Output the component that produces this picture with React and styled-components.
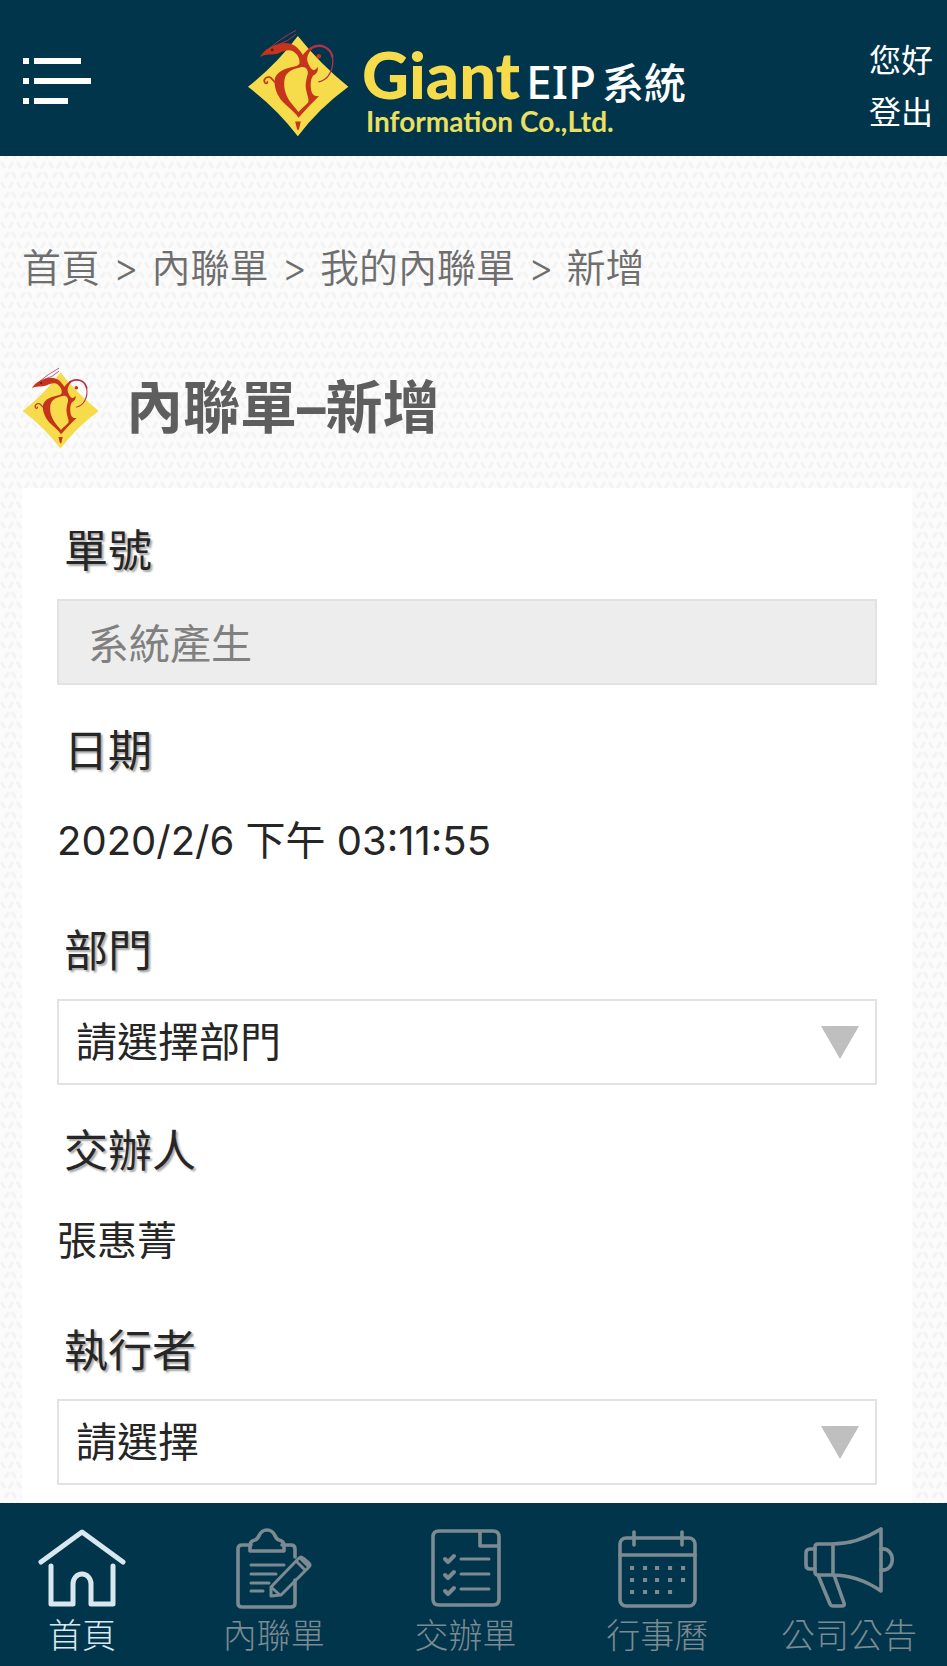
import React from "react"
import styled, { createGlobalStyle } from "styled-components"

const colors = {
  Navy: "#01354b",
  Yellow: "#f6dc4b",
  Red: "#c6341b",
  Gray: "#6e6e6e",
  TitleGray: "#5e5e5e",
  Border: "#e2e2e2",
  Text: "#262626",
}

const weave = `url("data:image/svg+xml,%3Csvg xmlns='http://www.w3.org/2000/svg' width='16' height='20'%3E%3Cg fill='none' stroke='%23f3f3f3' stroke-width='3'%3E%3Cpath d='M1 2l4 6M9 8l4-6M5 18l4-6M12 12l4 6'/%3E%3C/g%3E%3C/svg%3E")`

const GlobalStyle = createGlobalStyle`
  * {
    box-sizing: border-box;
  }
  body {
    margin: 0;
    background: #fbfbfb ${weave};
    color: ${colors.Text};
    font-family: Inter, "Noto Sans CJK TC", sans-serif;
  }
`

const Page = styled.div`
  display: flex;
  flex-direction: column;
  min-height: 100vh;
`
const Header = styled.header`
  display: grid;
  grid-template-columns: 1fr auto 1fr;
  align-items: center;
  height: 156px;
  padding: 0 14px 0 22px;
  background: ${colors.Navy};
`
const MenuButton = styled.button`
  justify-self: start;
  display: flex;
  padding: 6px 0 0;
  border: 0;
  background: none;
`
const Logo = styled.a`
  display: flex;
  align-items: center;
  gap: 12px;
  padding: 10px 22px 0 0;
  text-decoration: none;
`
const LogoText = styled.span`
  display: grid;
  padding-top: 14px;
`
const LogoTop = styled.span`
  display: flex;
  align-items: baseline;
  gap: 6px;
  line-height: 52px;
`
const Brand = styled.span`
  color: ${colors.Yellow};
  font-family: Lato, sans-serif;
  font-size: 65px;
  font-weight: 900;
`
const System = styled.span`
  color: #fff;
  font-family: "Noto Sans", "Noto Sans CJK TC", sans-serif;
  font-size: ${props => props.size}px;
  font-weight: 500;
`
const Company = styled.span`
  padding-left: 4px;
  color: #e9e062;
  font-family: Lato, sans-serif;
  font-size: 28px;
  font-weight: 700;
  line-height: 24px;
`
const UserLinks = styled.div`
  justify-self: end;
  display: grid;
  padding-top: 18px;
`
const UserLink = styled.a`
  color: #fff;
  font-size: 32px;
  line-height: 52px;
  text-decoration: none;
`
const Main = styled.main`
  flex: 1;
  display: flex;
  flex-direction: column;
  padding: 82px 35px 0 22px;
`
const Breadcrumb = styled.nav`
  display: flex;
  gap: 13px;
  color: ${colors.Gray};
  font-size: 39px;
  font-weight: 350;
  line-height: 60px;
`
const Crumb = styled.a`
  color: inherit;
  text-decoration: none;
`
const TitleRow = styled.div`
  display: flex;
  align-items: center;
  gap: 26px;
  margin: 69px 0 39px;
`
const Title = styled.h1`
  margin: 0;
  color: ${colors.TitleGray};
  font-size: 57px;
  font-weight: 700;
  line-height: 80px;
`
const Card = styled.form`
  flex: 1;
  padding: 15px 35px 0;
  background: #fff;
`
const Field = styled.div`
  margin-bottom: 18px;
`
const Label = styled.label`
  display: block;
  padding-left: 7px;
  font-size: 44px;
  font-weight: 400;
  line-height: 96px;
  text-shadow: 2px 2px 2px rgba(0, 0, 0, 0.35);
`
const Value = styled.output`
  display: block;
  font-size: 40px;
  line-height: 84px;
  padding-bottom: 2px;
`
const TextInput = styled.input`
  display: block;
  width: 100%;
  height: 86px;
  padding: 0 29px 2px;
  border: 2px solid ${colors.Border};
  border-radius: 0;
  background: #ededed;
  color: #808080;
  font: inherit;
  font-size: 41px;
`
const SelectBox = styled.div`
  position: relative;

  &::after {
    content: "";
    position: absolute;
    top: 27px;
    right: 18px;
    border: solid transparent;
    border-width: 33px 19px 0;
    border-top-color: #bfbfbf;
    pointer-events: none;
  }
`
const Select = styled.select`
  display: block;
  width: 100%;
  height: 86px;
  padding: 0 60px 0 17px;
  border: 2px solid ${colors.Border};
  border-radius: 0;
  appearance: none;
  background: #fff;
  color: ${colors.Text};
  font: inherit;
  font-size: 41px;
`
const TabBar = styled.nav`
  position: sticky;
  bottom: 0;
  display: flex;
  justify-content: space-between;
  height: 163px;
  padding: 22px 28px 0 12px;
  background: ${colors.Navy};
`
const Tab = styled.a`
  display: flex;
  flex-direction: column;
  align-items: center;
  width: 140px;
  color: ${props => (props.$active ? "#d9e8ef" : "#7c8a92")};
  font-size: 34px;
  font-weight: 300;
  line-height: 50px;
  text-decoration: none;
  white-space: nowrap;
`

const DragonLogo = ({ width, height }) => (
  <svg width={width} height={height} viewBox="20 25 310 325" aria-hidden="true">
    <path
      d="M173 46Q240 130 325 199Q235 265 173 348Q110 265 23 199Q110 130 173 46Z"
      fill={colors.Yellow}
    />
    <g fill={colors.Red}>
      <path d="M59 110C66 96 78 84 98 76C125 63 155 64 172 82C180 90 184 96 188 103C194 96 200 88 212 80L216 86C203 98 199 112 202 122C206 134 212 146 219 148C226 149 229 144 233 139C235 150 230 160 220 164C211 174 210 195 214 213C218 225 226 228 237 227C222 242 212 252 203 261L175 292C164 274 142 260 127 243C110 225 102 198 103 182C104 158 128 146 150 141C166 137 175 136 178 128C180 112 170 98 157 91C143 86 128 92 116 98C98 105 74 98 59 110ZM182 140C158 146 138 152 133 176C128 205 140 232 153 248C160 258 168 265 175 275C184 264 196 255 204 246C208 236 200 222 198 208C194 190 200 174 203 160C205 148 196 136 182 140Z" />
      <path d="M165 303H182L176 328H171Z" />
      <circle cx="236" cy="107" r="7" />
    </g>
    <g fill="none" stroke="#b5304a" strokeLinecap="round">
      <path d="M210 84C240 65 270 80 277 108" strokeWidth="7" />
      <path d="M277 108C283 142 267 178 236 184" strokeWidth="4" />
      <path d="M92 80Q120 54 166 30M115 72Q145 62 166 42" strokeWidth="3" />
    </g>
    <path
      d="M110 184C100 190 99 172 87 170C76 168 68 179 74 187C79 191 84 187 80 182"
      fill="none"
      stroke={colors.Red}
      strokeWidth="5"
    />
    <circle cx="96" cy="88" r="4" fill="#5b1a22" />
  </svg>
)

const MenuIcon = () => (
  <svg width="70" height="48" viewBox="0 0 70 48" fill="#fff" aria-hidden="true">
    <path d="M1 1h6v6H1zM12 1h47v6H12zM1 21h6v6H1zM12 21h57v6H12zM1 41h6v6H1zM12 41h34v6H12z" />
  </svg>
)

const TabIcon = ({ children }) => (
  <svg
    width="96"
    height="86"
    viewBox="0 0 96 86"
    fill="none"
    stroke="currentColor"
    strokeWidth="3.6"
    strokeLinecap="round"
    strokeLinejoin="round"
    aria-hidden="true"
  >
    {children}
  </svg>
)

const HomeIcon = () => (
  <TabIcon>
    <path d="M7 37L48 7l41 30" strokeWidth="5" />
    <path d="M17 41v38h22V59a9 10 0 0 1 18 0v20h22V41" strokeWidth="5" />
  </TabIcon>
)

const ClipboardIcon = () => (
  <TabIcon>
    <g transform="translate(-7 0)">
      <path d="M32 20H23q-4 0-4 4v54q0 4 4 4h49q4 0 4-4V55M76 32V24q0-4-4-4h-9" />
      <path d="M31 26v-5q0-5 5-6c5-1 3-10 12-10s7 9 12 10q5 1 5 6v5z" />
      <path d="M32 40h33M32 49h25M32 58h18M32 66h12" strokeWidth="3" />
      <path
        d="M52 62l28-29q2-2 4 0l6 5q2 2 0 4L62 70l-10 1zM77 36l8 8M81 33l8 8M52 62l9 8"
        strokeWidth="3"
      />
    </g>
  </TabIcon>
)

const ChecklistIcon = () => (
  <TabIcon>
    <path d="M62 6H21q-6 0-6 6v62q0 6 6 6h54q6 0 6-6V12q0-6-6-6zH62v15h19" />
    <path d="M43 34h28M43 49h28M43 64h28" strokeWidth="3" />
    <path d="M27 34l3 3 6-6M27 50l3 3 6-6M27 66l3 3 6-6" strokeWidth="4" />
  </TabIcon>
)

const CalendarIcon = () => (
  <TabIcon>
    <rect x="11" y="13" width="75" height="68" rx="6" />
    <path d="M11 30h75M25 7v13M73 7v13" />
    <path
      d="M23 43h.1M36 43h.1M48 43h.1M61 43h.1M74 43h.1M23 55h.1M36 55h.1M48 55h.1M61 55h.1M74 55h.1M23 67h.1M36 67h.1M48 67h.1M61 67h.1"
      strokeWidth="4"
      strokeLinecap="square"
    />
  </TabIcon>
)

const MegaphoneIcon = () => (
  <TabIcon>
    <path d="M31 19C48 19 64 14 80 4v62C64 55 48 50 31 50H17q-3 0-3-3V22q0-3 3-3zM32 19v31" />
    <path d="M14 24H9q-4 0-4 4v12q0 4 4 4h5M80 24c15-2 15 23 0 21" />
    <path d="M17 50l12 29q1 2 3 2h9q3 0 2-3L33 50" />
  </TabIcon>
)

const crumbs = ["首頁", "內聯單", "我的內聯單", "新增"]

const tabs = [
  { name: "首頁", Icon: HomeIcon },
  { name: "內聯單", Icon: ClipboardIcon },
  { name: "交辦單", Icon: ChecklistIcon },
  { name: "行事曆", Icon: CalendarIcon },
  { name: "公司公告", Icon: MegaphoneIcon },
]

const SelectField = ({ id, label, placeholder }) => (
  <Field>
    <Label htmlFor={id}>{label}</Label>
    <SelectBox>
      <Select id={id}>
        <option>{placeholder}</option>
      </Select>
    </SelectBox>
  </Field>
)

const ValueField = ({ id, label, value }) => (
  <Field>
    <Label htmlFor={id}>{label}</Label>
    <Value id={id}>{value}</Value>
  </Field>
)

const App = () => {
  return (
    <Page>
      <GlobalStyle />
      <Header>
        <MenuButton type="button" aria-label="選單">
          <MenuIcon />
        </MenuButton>
        <Logo href="#">
          <DragonLogo width={103} height={108} />
          <LogoText>
            <LogoTop>
              <Brand>Giant</Brand>
              <System size={46}>EIP</System>
              <System size={42}>系統</System>
            </LogoTop>
            <Company>Information Co.,Ltd.</Company>
          </LogoText>
        </Logo>
        <UserLinks>
          <UserLink href="#">您好</UserLink>
          <UserLink href="#">登出</UserLink>
        </UserLinks>
      </Header>
      <Main>
        <Breadcrumb>
          {crumbs.map((crumb, i) => (
            <React.Fragment key={crumb}>
              {i > 0 && <span>&gt;</span>}
              <Crumb href="#">{crumb}</Crumb>
            </React.Fragment>
          ))}
        </Breadcrumb>
        <TitleRow>
          <DragonLogo width={78} height={82} />
          <Title>內聯單–新增</Title>
        </TitleRow>
        <Card>
          <Field>
            <Label htmlFor="number">單號</Label>
            <TextInput id="number" value="系統產生" disabled readOnly />
          </Field>
          <ValueField id="date" label="日期" value="2020/2/6 下午 03:11:55" />
          <SelectField id="department" label="部門" placeholder="請選擇部門" />
          <ValueField id="assigner" label="交辦人" value="張惠菁" />
          <SelectField id="executor" label="執行者" placeholder="請選擇" />
        </Card>
      </Main>
      <TabBar>
        {tabs.map(({ name, Icon }, i) => (
          <Tab key={name} href="#" $active={i === 0}>
            <Icon />
            {name}
          </Tab>
        ))}
      </TabBar>
    </Page>
  )
}

export default App
